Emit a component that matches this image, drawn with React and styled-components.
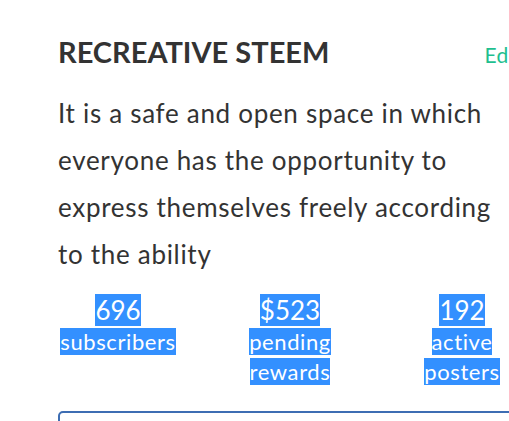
import React from "react";
import styled, { createGlobalStyle } from "styled-components";

const GlobalStyle = createGlobalStyle`
  body {
    margin: 0;
    background: #fff;
    font-family: "Lato", "Liberation Sans", sans-serif;
    overflow: hidden;
  }
`;

const Panel = styled.div`
  width: 516px;
  padding: 35px 0 0 32px;
  color: #333;
`;

const Header = styled.div`
  display: flex;
  align-items: baseline;
  justify-content: space-between;
  padding: 0 26px;
`;

const Title = styled.h2`
  margin: 0;
  font-size: 29px;
  font-weight: 700;
  line-height: 1.2;
  color: #333;
`;

const EditLink = styled.a`
  color: #1fbf8f;
  font-size: 21px;
  letter-spacing: 0.4px;
  text-decoration: none;
`;

const Description = styled.p`
  margin: 20px 0 0 26px;
  max-width: 450px;
  font-size: 26px;
  line-height: 47px;
  letter-spacing: 0.7px;
`;

const Stats = styled.div`
  display: grid;
  grid-template-columns: repeat(3, 1fr);
  margin-top: 16px;
  text-align: center;
`;

const Stat = styled.div`
  display: flex;
  flex-direction: column;
  align-items: center;
`;

const Selected = styled.span`
  background: #3390ff;
  color: #fff;
`;

const Number = styled.div`
  font-size: 26px;
  line-height: 33px;
`;

const Label = styled.div`
  font-size: 22px;
  line-height: 30px;
  letter-spacing: 0.6px;
`;

const Box = styled.div`
  margin: 24px 0 0 26px;
  height: 40px;
  border: 2px solid #3d6db3;
  border-radius: 5px;
`;

const stats = [
  { value: "696", label: ["subscribers"] },
  { value: "$523", label: ["pending", "rewards"] },
  { value: "192", label: ["active", "posters"] },
];

export default function App() {
  return (
    <>
      <GlobalStyle />
      <Panel>
        <Header>
          <Title>RECREATIVE STEEM</Title>
          <EditLink href="#">Edit</EditLink>
        </Header>
        <Description>
          It is a safe and open space in which everyone has the opportunity to
          express themselves freely according to the ability
        </Description>
        <Stats>
          {stats.map((s) => (
            <Stat key={s.value}>
              <Number>
                <Selected>{s.value}</Selected>
              </Number>
              {s.label.map((l) => (
                <Label key={l}>
                  <Selected>{l}</Selected>
                </Label>
              ))}
            </Stat>
          ))}
        </Stats>
        <Box />
      </Panel>
    </>
  );
}
